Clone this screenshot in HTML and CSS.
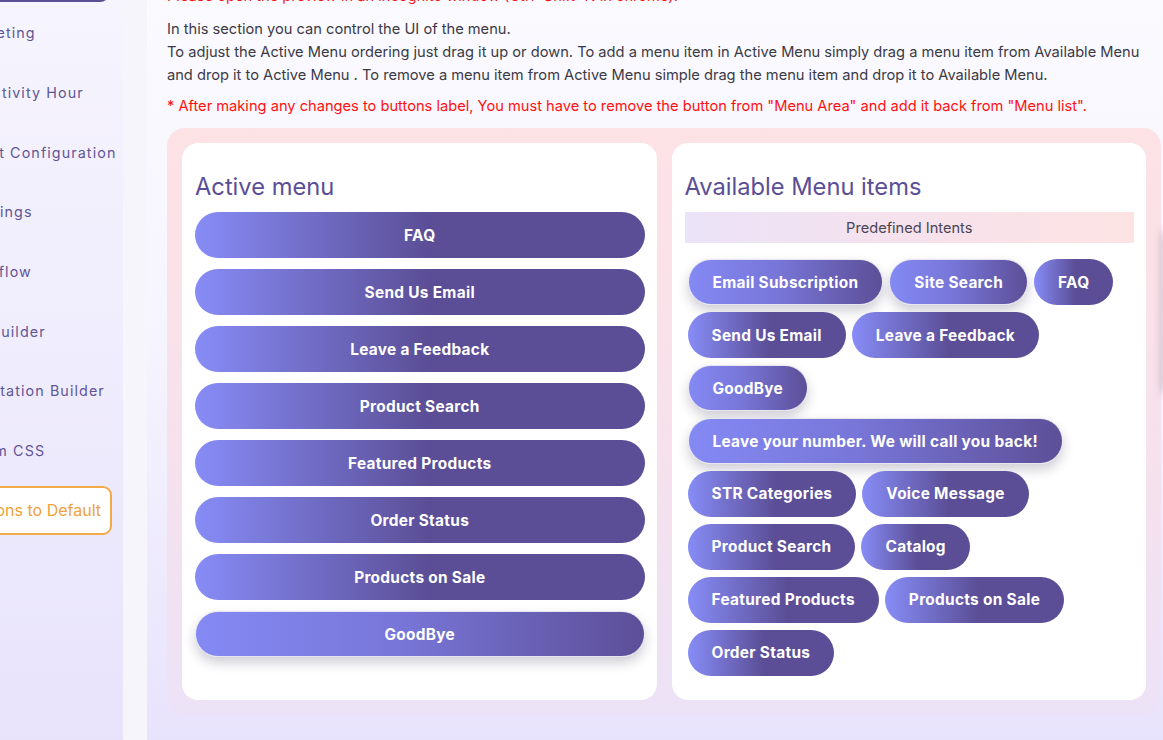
FILE: index.html
```html
<!DOCTYPE html>
<html lang="en">
<head>
<meta charset="utf-8">
<title>Menu Settings</title>
<link rel="stylesheet" href="styles.css">
</head>
<body>
<div class="layout">
  <aside class="sidebar">
    <nav class="side-nav">
      <div class="side-link is-active">Menu Settings</div>
      <div class="side-link">Greeting</div>
      <div class="side-link">Inactivity Hour</div>
      <div class="side-link">Chat Configuration</div>
      <div class="side-link">Settings</div>
      <div class="side-link">Subflow</div>
      <div class="side-link">UI Builder</div>
      <div class="side-link">Quotation Builder</div>
      <div class="side-link">Form CSS</div>
      <button class="reset-btn">Reset Options to Default</button>
    </nav>
  </aside>

  <main class="main">
    <p class="warn-top">Please open the preview in an incognito window (Ctrl+Shift+N in chrome).</p>
    <p class="intro">In this section you can control the UI of the menu.<br>
    To adjust the Active Menu ordering just drag it up or down. To add a menu item in Active Menu simply drag a menu item from Available Menu and drop it to Active Menu . To remove a menu item from Active Menu simple drag the menu item and drop it to Available Menu.</p>
    <p class="note">* After making any changes to buttons label, You must have to remove the button from "Menu Area" and add it back from "Menu list".</p>

    <section class="menu-board">
      <div class="card">
        <h2 class="card-title">Active menu</h2>
        <div class="active-list">
          <div class="menu-btn">FAQ</div>
          <div class="menu-btn">Send Us Email</div>
          <div class="menu-btn">Leave a Feedback</div>
          <div class="menu-btn">Product Search</div>
          <div class="menu-btn">Featured Products</div>
          <div class="menu-btn">Order Status</div>
          <div class="menu-btn">Products on Sale</div>
          <div class="menu-btn is-raised">GoodBye</div>
        </div>
      </div>

      <div class="card">
        <h2 class="card-title">Available Menu items</h2>
        <div class="group-bar">Predefined Intents</div>
        <div class="chip-list">
          <div class="chip is-raised">Email Subscription</div>
          <div class="chip is-raised">Site Search</div>
          <div class="chip">FAQ</div>
          <div class="chip">Send Us Email</div>
          <div class="chip">Leave a Feedback</div>
          <div class="chip is-raised">GoodBye</div>
          <div class="chip is-raised">Leave your number. We will call you back!</div>
          <div class="chip">STR Categories</div>
          <div class="chip">Voice Message</div>
          <div class="chip">Product Search</div>
          <div class="chip">Catalog</div>
          <div class="chip">Featured Products</div>
          <div class="chip">Products on Sale</div>
          <div class="chip">Order Status</div>
        </div>
      </div>
    </section>
  </main>
</div>
<div class="drawer-edge"></div>
</body>
</html>
```

FILE: styles.css
```css
html, body {
  margin: 0;
  padding: 0;
}

body {
  width: 1163px;
  height: 740px;
  overflow: hidden;
  background: #f5f5fb;
  font-family: "Inter", "Noto Sans", sans-serif;
  color: #3b3a46;
}

.layout {
  display: flex;
  height: 740px;
}

/* ---- sidebar ---- */
.sidebar {
  width: 123px;
  flex: none;
  overflow: hidden;
  background: linear-gradient(180deg, #f6f4fd 0%, #efecfd 50%, #e8e3fb 100%);
}

.side-nav {
  width: 264px;
  margin-left: -141px;
  margin-top: -44px;
  display: flex;
  flex-direction: column;
}

.side-link {
  height: 59.7px;
  display: flex;
  align-items: center;
  padding-left: 110px;
  font-size: 14.3px;
  font-weight: 400;
  letter-spacing: 1.1px;
  color: #5f5696;
  white-space: nowrap;
}

.side-link.is-active {
  height: 46px;
  margin-bottom: 1px;
  margin-right: 13px;
  border-radius: 10px;
  background: #5b4e96;
  color: #fff;
}

.reset-btn {
  margin-top: 5px;
  margin-right: 11px;
  height: 49px;
  border: 2px solid #f2aa48;
  border-radius: 9px;
  background: #fff;
  color: #f0a13a;
  font-family: inherit;
  font-size: 16px;
  text-align: right;
  padding: 0 9px 0 0;
  white-space: nowrap;
}

/* ---- main ---- */
.main {
  flex: 1;
  margin-left: 24px;
  padding: 0 2px 0 20px;
  background: linear-gradient(180deg, #fbfaff 0%, #f6f4fe 45%, #e8e3fc 100%);
}

.warn-top {
  margin: -15px 0 0;
  font-size: 14.65px;
  line-height: 22px;
  color: #f01818;
}

.intro {
  margin: 11px 0 0;
  font-size: 14.65px;
  line-height: 22.8px;
  color: #3b3a46;
}

.note {
  margin: 9px 0 0;
  font-size: 14.65px;
  line-height: 22px;
  color: #ff1010;
}

.menu-board {
  margin-top: 11px;
  display: grid;
  grid-template-columns: 1fr 1fr;
  gap: 15px;
  padding: 15px;
  border-radius: 18px;
  background: linear-gradient(180deg, #fde2e5 0%, #f6e1ec 55%, #ece2f7 100%);
}

.card {
  background: #fff;
  border-radius: 16px;
  padding: 29px 12px 24px 13px;
}

.card-title {
  margin: 0 0 10px;
  font-size: 23.7px;
  line-height: 30px;
  font-weight: 400;
  color: #5b4e96;
}

/* Active menu column */
.active-list {
  display: flex;
  flex-direction: column;
  gap: 11px;
}

.menu-btn,
.chip {
  height: 46px;
  box-sizing: border-box;
  display: flex;
  align-items: center;
  justify-content: center;
  border-radius: 23px;
  color: #fff;
  font-size: 15.4px;
  font-weight: 700;
  letter-spacing: 0.3px;
  white-space: nowrap;
  background: linear-gradient(90deg, #878cf6 0%, #5b4e96 52%, #5b4e96 100%);
}

.menu-btn.is-raised,
.chip.is-raised {
  border: 1px solid #e8e6f0;
  background: linear-gradient(90deg, #8489f4 0%, #7876d8 45%, #5d4f98 100%);
  box-shadow: 0 6px 12px rgba(40, 30, 70, 0.22);
}

/* Available items column */
.group-bar {
  height: 31px;
  display: flex;
  align-items: center;
  justify-content: center;
  font-size: 14.6px;
  color: #4a4456;
  background: linear-gradient(90deg, #ebe3f8 0%, #f6e2ec 50%, #fde3e3 100%);
}

.chip-list {
  margin-top: 16px;
  padding-left: 3px;
  display: flex;
  flex-wrap: wrap;
  gap: 6.9px 6px;
}

.chip {
  padding: 0 24px;
}

/* shadow cast by the slide-out panel at the right edge */
.drawer-edge {
  position: fixed;
  top: 232px;
  right: -30px;
  width: 30px;
  height: 160px;
  box-shadow: 0 0 10px rgba(60, 50, 60, 0.35);
  background: #ece6ee;
}
```
